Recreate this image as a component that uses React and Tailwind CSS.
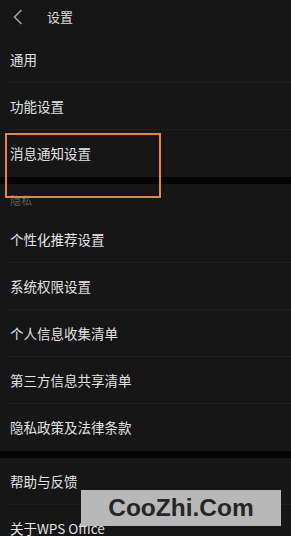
const Row = ({ label, line = true }) => (
  <div className="relative h-[47px] flex items-center pl-[10px] text-[13.5px] text-[#e2e2e2]">
    {label}
    {line && <div className="absolute left-[8px] right-0 bottom-0 h-px bg-[#1f1f1f]" />}
  </div>
);

const App = () => {
  return (
    <div
      className="relative w-[291px] h-[536px] overflow-hidden bg-[#161616]"
      style={{ fontFamily: '"Noto Sans CJK SC", "Noto Sans", sans-serif' }}
    >
      {/* Header */}
      <div className="h-[36px] flex items-center">
        <svg width="10" height="16" viewBox="0 0 10 16" className="ml-[13px] -mt-[2px]">
          <path d="M8.5 1 L1.5 8 L8.5 15" fill="none" stroke="#a8a8a8" strokeWidth="1.5" />
        </svg>
        <span className="ml-[24px] -mt-[2px] text-[13px] text-[#dcdcdc]">设置</span>
      </div>

      <Row label="通用" />
      <Row label="功能设置" />
      <Row label="消息通知设置" line={false} />

      <div className="h-[7px] bg-[#050505]" />

      <div className="h-[32px] flex items-center pl-[10px] text-[11px] text-[#5e5e5e]">隐私</div>
      <Row label="个性化推荐设置" />
      <Row label="系统权限设置" />
      <Row label="个人信息收集清单" />
      <Row label="第三方信息共享清单" />
      <Row label="隐私政策及法律条款" line={false} />

      <div className="h-[7px] bg-[#050505]" />

      <Row label="帮助与反馈" />
      <Row label="关于WPS Office" line={false} />

      {/* highlight box */}
      <div className="absolute left-[5px] top-[133px] w-[156px] h-[65px] border-2 border-[#e5844a]" />

      {/* watermark */}
      <div
        className="absolute left-[81px] top-[490px] w-[200px] h-[36px] bg-[#b8b8b8] flex items-center justify-center text-[24.5px] font-bold text-[#262626]"
        style={{ fontFamily: '"Liberation Sans", Arial, sans-serif' }}
      >
        CooZhi.Com
      </div>
    </div>
  );
};

export default App;
